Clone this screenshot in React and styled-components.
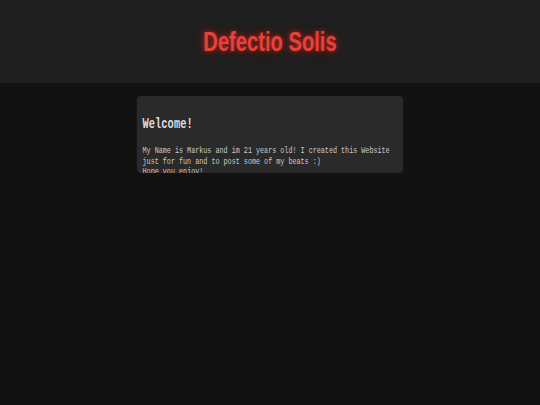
import React from 'react';
import styled, { createGlobalStyle } from 'styled-components';

const GlobalStyle = createGlobalStyle`
    html, body {
        margin: 0;
        padding: 0;
        background-color: #121212;
        overflow: hidden;
    }
`;

// the page is laid out at 750px and squeezed to the 540px window
const Stage = styled.div`
    width: 750px;
    min-height: 405px;
    transform: scaleX(0.72);
    transform-origin: 0 0;
    background-color: #121212;
    font-family: 'Liberation Mono', 'Courier New', monospace;
`;

const Header = styled.header`
    height: 83px;
    background-color: #1f1f1f;
    display: flex;
    align-items: center;
    justify-content: center;
`;

const Title = styled.h1`
    margin: 0;
    font-family: 'Liberation Sans', Arial, sans-serif;
    font-weight: 700;
    font-size: 28px;
    color: #e4423a;
    text-shadow: 0 0 5px rgba(230, 40, 30, 0.7), 0 0 12px rgba(200, 30, 20, 0.55);
`;

const Main = styled.main`
    display: flex;
    justify-content: center;
    padding-top: 13px;
`;

const Card = styled.section`
    width: 370px;
    height: 77px;
    box-sizing: border-box;
    padding: 8px 8px 0;
    background-color: #2a2a2a;
    border-radius: 5px;
    overflow: hidden;
    color: #cacaca;
`;

const Heading = styled.h2`
    margin: 12px 0 14px;
    font-size: 14.5px;
    line-height: 16px;
    font-weight: 700;
    color: #dedede;
`;

const Text = styled.p`
    margin: 0;
    font-size: 9.4px;
    line-height: 10.5px;
`;

export default function App() {
    return (
        <>
            <GlobalStyle />
            <Stage>
                <Header>
                    <Title>Defectio Solis</Title>
                </Header>
                <Main>
                    <Card>
                        <Heading>Welcome!</Heading>
                        <Text>
                            My Name is Markus and im 21 years old! I created this Website just for fun and to post some of my beats :)
                            <br />
                            Hope you enjoy!
                        </Text>
                    </Card>
                </Main>
            </Stage>
        </>
    );
}
